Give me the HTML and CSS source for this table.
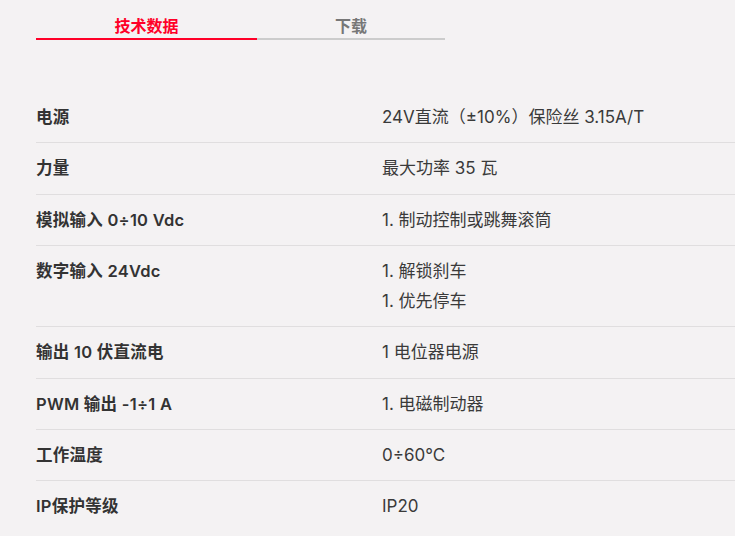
FILE: index.html
```html
<!DOCTYPE html>
<html lang="zh">
<head>
<meta charset="utf-8">
<link rel="stylesheet" href="styles.css">
</head>
<body>
<div class="page">
  <div class="tabs">
    <div class="tab active">技术数据</div>
    <div class="tab">下载</div>
  </div>
  <div class="specs">
    <div class="row">
      <div class="label">电源</div>
      <div class="value">24V直流（±10%）保险丝 3.15A/T</div>
    </div>
    <div class="row">
      <div class="label">力量</div>
      <div class="value">最大功率 35 瓦</div>
    </div>
    <div class="row">
      <div class="label">模拟输入 0÷10 Vdc</div>
      <div class="value">1. 制动控制或跳舞滚筒</div>
    </div>
    <div class="row">
      <div class="label">数字输入 24Vdc</div>
      <ul class="value list">
        <li>1. 解锁刹车</li>
        <li>1. 优先停车</li>
      </ul>
    </div>
    <div class="row">
      <div class="label">输出 10 伏直流电</div>
      <div class="value">1 电位器电源</div>
    </div>
    <div class="row">
      <div class="label">PWM 输出 -1÷1 A</div>
      <div class="value">1. 电磁制动器</div>
    </div>
    <div class="row">
      <div class="label">工作温度</div>
      <div class="value">0÷60°C</div>
    </div>
    <div class="row last">
      <div class="label">IP保护等级</div>
      <div class="value">IP20</div>
    </div>
  </div>
</div>
</body>
</html>
```

FILE: styles.css
```css
html, body {
  margin: 0;
  padding: 0;
  background: #f4f2f3;
}
body {
  font-family: Inter, "Noto Sans CJK SC", sans-serif;
  color: #333;
  font-size: 16px;
}
.page {
  padding: 15px 0 0 36px;
}
.tabs {
  display: flex;
  width: 409px;
}
.tab {
  padding: 0 0 1px;
  line-height: 22px;
  text-align: center;
  font-weight: 700;
  color: #777;
  border-bottom: 2px solid #cccccc;
}
.tab.active {
  width: 221px;
  color: #ff0028;
  border-bottom-color: #ff0028;
}
.tab:not(.active) {
  flex: 1;
}
.specs {
  margin-top: 52px;
}
.row {
  display: grid;
  grid-template-columns: 346px 1fr;
  padding: 11px 0 11px;
  border-bottom: 1px solid #e0dedf;
  line-height: 28.3px;
}
.row.last {
  border-bottom: none;
}
.label {
  font-weight: 600;
  font-size: 16.5px;
  letter-spacing: 0.25px;
  color: #333;
}
.value {
  font-size: 17px;
  color: #3a3a3a;
}
.list {
  list-style: none;
  margin: 0;
  padding: 0;
}
.list li + li {
  margin-top: 2px;
}
```
